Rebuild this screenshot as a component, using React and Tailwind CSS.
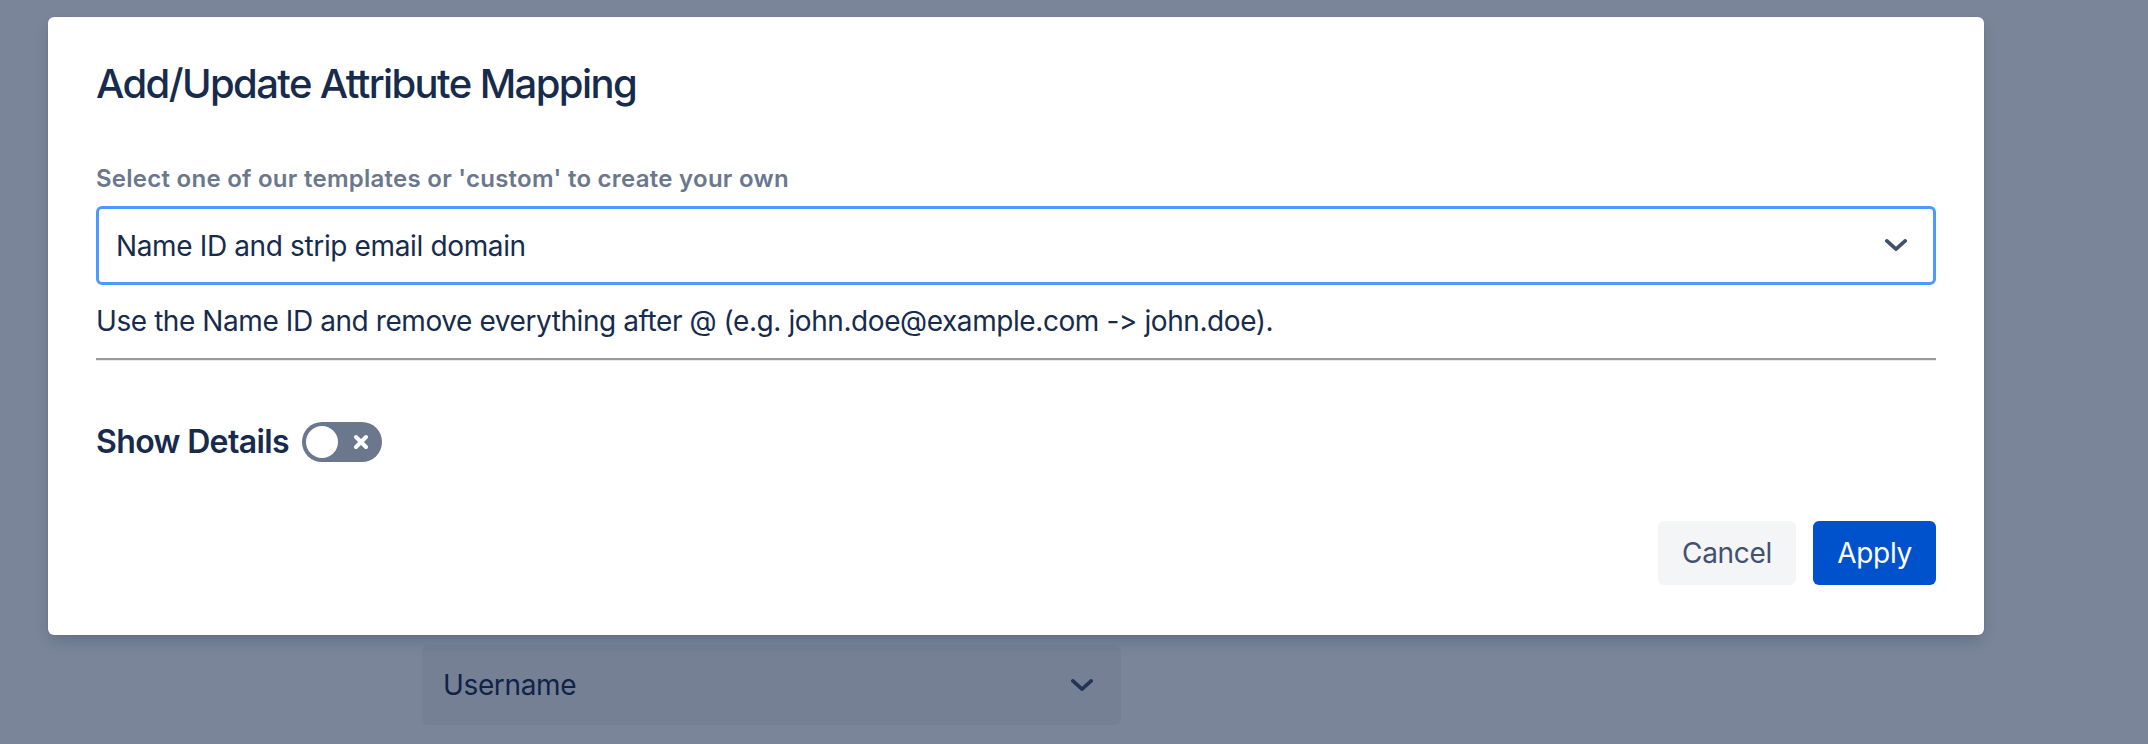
const Chevron = ({ className }) => (
  <svg viewBox="0 0 24 14" className={className} fill="none" stroke="currentColor" strokeWidth="4" strokeLinecap="round" strokeLinejoin="round">
    <polyline points="2,2 12,11 22,2" />
  </svg>
);

const App = () => {
  return (
    <div className="relative h-[744px] w-[2148px] overflow-hidden bg-white font-['Inter',sans-serif] text-[#172b4d] [font-feature-settings:'calt'_0]">
      {/* page behind the blanket */}
      <div className="pt-[645px] pl-[422px]">
        <div className="flex h-[80px] w-[699px] items-center justify-between rounded-[6px] bg-[#f4f5f7] pl-[21px] pr-[28px]">
          <span className="text-[28px] tracking-[-0.013em]">Username</span>
          <Chevron className="h-[13px] w-[22px] text-[#42526e]" />
        </div>
      </div>

      {/* blanket */}
      <div className="absolute inset-0 bg-[rgba(9,30,66,0.54)]" />

      {/* modal */}
      <div className="absolute left-[48px] top-[17px] w-[1936px] rounded-[6px] bg-white px-[48px] pt-[43px] pb-[50px] shadow-[0_8px_16px_-4px_rgba(9,30,66,0.25),0_0_1px_rgba(9,30,66,0.31)]">
        <h2 className="text-[40px] leading-[48px] font-medium tracking-[-0.04em]">Add/Update Attribute Mapping</h2>

        <label className="mt-[55px] block text-[24px] leading-[32px] font-semibold tracking-[0.011em] text-[#6b778c]">
          Select one of our templates or 'custom' to create your own
        </label>

        <div className="mt-[11px] flex h-[79px] items-center justify-between rounded-[6px] border-[3px] border-[#4c9aff] pl-[17px] pr-[26px]">
          <span className="text-[28px] tracking-[-0.013em]">Name ID and strip email domain</span>
          <Chevron className="h-[13px] w-[22px] text-[#42526e]" />
        </div>

        <p className="mt-[16px] text-[28px] leading-[40px] tracking-[-0.015em]">
          Use the Name ID and remove everything after @ (e.g. john.doe@example.com -&gt; john.doe).
        </p>

        <div className="mt-[17px] h-[3px] border-t-2 border-b border-t-[#9a9a9a] border-b-[#ebebeb]" />

        <div className="mt-[57px] flex items-center gap-[13px]">
          <span className="text-[32px] font-semibold tracking-[-0.02em]">Show Details</span>
          <div className="flex h-[40px] w-[80px] items-center justify-between rounded-full bg-[#6b778c] pl-[4px] pr-[13px]">
            <div className="h-[32px] w-[32px] rounded-full bg-white" />
            <svg viewBox="0 0 16 16" className="h-[16px] w-[16px]" fill="none" stroke="white" strokeWidth="4" strokeLinecap="round">
              <path d="M3 3 L13 13 M13 3 L3 13" />
            </svg>
          </div>
        </div>

        <div className="mt-[55px] flex justify-end gap-[17px]">
          <button className="h-[64px] rounded-[6px] bg-[#f4f5f7] px-[24px] text-[28px] tracking-[-0.01em] text-[#42526e]">Cancel</button>
          <button className="h-[64px] rounded-[6px] bg-[#0052cc] px-[24px] text-[28px] tracking-[-0.01em] text-white">Apply</button>
        </div>
      </div>
    </div>
  );
};

export default App;
